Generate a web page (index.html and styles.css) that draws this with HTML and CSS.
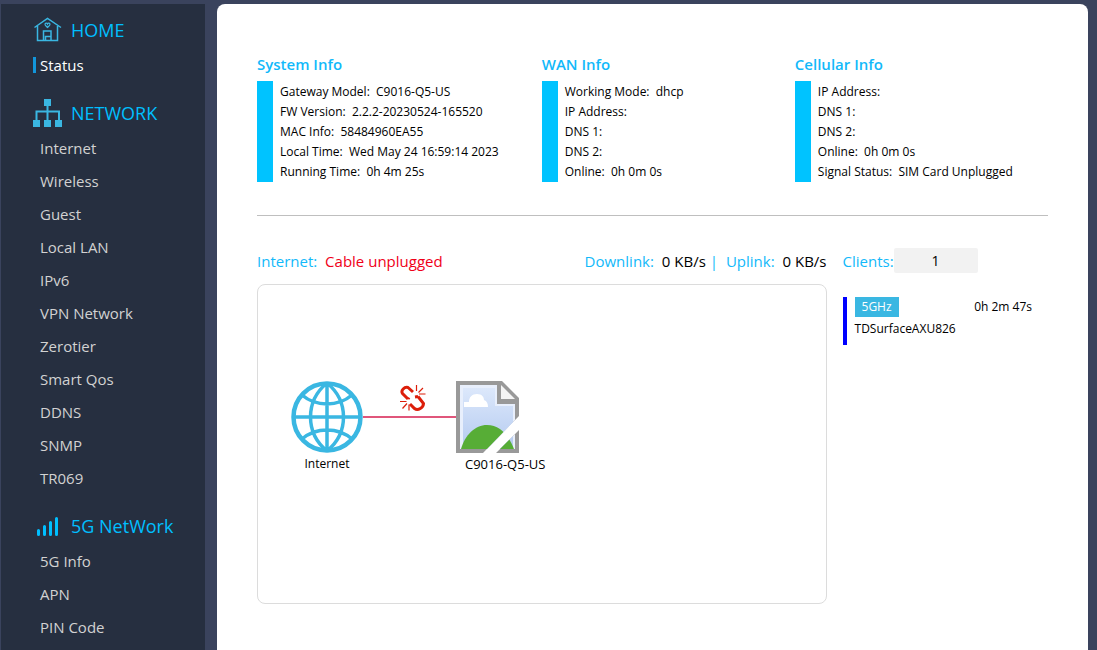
FILE: index.html
```html
<!DOCTYPE html>
<html lang="en">
<head>
  <meta charset="UTF-8" />
  <meta name="viewport" content="width=device-width, initial-scale=1" />
  <title>C9016-Q5-US</title>
  <link rel="stylesheet" href="styles.css">
</head>
<body>

  <nav class="sidebar">
    <h2 class="menu-title">
      <svg class="menu-icon" width="30" height="28" viewBox="0 0 30 28" fill="none" stroke="#3ab7e2" stroke-width="1.5">
        <path d="M1.500 11.500 14.500 2.500 28 11.500M4.500 10v14.500h20V10M10.500 24.500V15h7.500v9.500M12.500 24.500v-4h5"/>
        <path d="M14.500 11.500c-1.500-1.500-2.500-2-2.500-3.200 0-1.500 2-1.600 2.500-.3.500-1.300 2.500-1.200 2.500.3 0 1.200-1 1.700-2.500 3.200z" stroke-width="1.200"/>
      </svg>
      HOME
    </h2>
    <ul class="menu">
      <li><a class="active" href="#">Status</a></li>
    </ul>

    <h2 class="menu-title">
      <svg class="menu-icon" width="30" height="28" viewBox="0 0 30 28" fill="#3ab7e2">
        <path d="M11 0h7v7h-7zM0 21h7v7H0zM11 21h7v7h-7zM22 21h7v7h-7z"/>
        <path d="M3.500 21v-8.500h22.500V21M14.500 7v14" fill="none" stroke="#3ab7e2" stroke-width="2"/>
      </svg>
      NETWORK
    </h2>
    <ul class="menu">
      <li><a href="#">Internet</a></li>
      <li><a href="#">Wireless</a></li>
      <li><a href="#">Guest</a></li>
      <li><a href="#">Local LAN</a></li>
      <li><a href="#">IPv6</a></li>
      <li><a href="#">VPN Network</a></li>
      <li><a href="#">Zerotier</a></li>
      <li><a href="#">Smart Qos</a></li>
      <li><a href="#">DDNS</a></li>
      <li><a href="#">SNMP</a></li>
      <li><a href="#">TR069</a></li>
    </ul>

    <h2 class="menu-title">
      <svg class="menu-icon" width="30" height="28" viewBox="0 0 30 28" stroke="#00bfff" stroke-width="3" stroke-linecap="round">
        <path d="M5.500 18.500v4M11.500 14.500v8M17.500 10.500v12M23.500 6.500v16"/>
      </svg>
      5G NetWork
    </h2>
    <ul class="menu">
      <li><a href="#">5G Info</a></li>
      <li><a href="#">APN</a></li>
      <li><a href="#">PIN Code</a></li>
    </ul>
  </nav>

  <main class="content">
    <div class="info-row">
      <section>
        <h3>System Info</h3>
        <ul class="info-list">
          <li>Gateway Model:&nbsp; C9016-Q5-US</li>
          <li>FW Version:&nbsp; 2.2.2-20230524-165520</li>
          <li>MAC Info:&nbsp; 58484960EA55</li>
          <li>Local Time:&nbsp; Wed May 24 16:59:14 2023</li>
          <li>Running Time:&nbsp; 0h 4m 25s</li>
        </ul>
      </section>
      <section>
        <h3>WAN Info</h3>
        <ul class="info-list">
          <li>Working Mode:&nbsp; dhcp</li>
          <li>IP Address:</li>
          <li>DNS 1:</li>
          <li>DNS 2:</li>
          <li>Online:&nbsp; 0h 0m 0s</li>
        </ul>
      </section>
      <section>
        <h3>Cellular Info</h3>
        <ul class="info-list">
          <li>IP Address:</li>
          <li>DNS 1:</li>
          <li>DNS 2:</li>
          <li>Online:&nbsp; 0h 0m 0s</li>
          <li>Signal Status:&nbsp; SIM Card Unplugged</li>
        </ul>
      </section>
    </div>

    <div class="status-row">
      <section>
        <div class="line-bar">
          <div><span class="label">Internet:</span> <span class="error">Cable unplugged</span></div>
          <div class="speed">
            <span class="label">Downlink:</span> <span>0 KB/s</span>
            <span class="label">|</span>
            <span class="label">Uplink:</span> <span>0 KB/s</span>
          </div>
        </div>

        <div class="topology">
          <div class="node">
            <svg width="72" height="72" viewBox="0 0 72 72" fill="none" stroke="#3ab7e2" stroke-width="3.5">
              <circle cx="36" cy="36" r="33.500" stroke-width="4.500"/>
              <path d="M36 2v68M2 36h68M36 2C14 20 14 52 36 70M36 2c22 18 22 50 0 68M11 14c14 12 36 12 50 0M11 58c14-12 36-12 50 0"/>
            </svg>
            <span>Internet</span>
          </div>
          <div class="link">
            <svg class="broken" width="26" height="26" viewBox="0 0 26 26" fill="none" stroke="#dc1e0a">
              <path d="M8 14 2.500 8.500C.5 5.500 4.500 1.500 8 2.500l5 4.500M10 19l4.500 4.500c3.500 2.500 9-1 9-5L18 11.500M8 14l1-1.500M18 11.500l-3 .5" stroke-width="3"/>
              <path d="M16.500 0v6M23 3l-4.500 4.500M25.500 9H19M0 16.500h6.500M2.500 23.500 7 18.500M9 25.500v-6" stroke-width="1.200"/>
            </svg>
          </div>
          <div class="node router">
            <svg width="63" height="72" viewBox="0 0 63 72">
              <defs>
                <linearGradient id="sky" x1="0" y1="0" x2="0" y2="1">
                  <stop offset="0" stop-color="#dce8fb"/>
                  <stop offset="1" stop-color="#b4caf0"/>
                </linearGradient>
                <clipPath id="page"><path d="M0 0h46l17 17v18L27 72H0zM63 49v23H40z"/></clipPath>
              </defs>
              <g clip-path="url(#page)">
                <path d="M0 0h63v72H0z" fill="#999"/>
                <path d="M4 4h37v19h18v45H4z" fill="#e8effc"/>
                <path d="M7 7h32v18h18v43H7z" fill="url(#sky)"/>
                <path d="M8 26v-5h5c0-5 3-8 8-8s7 3 7 6c3 1 4 4 4 7z" fill="#fff"/>
                <path d="M5 68c4-14 14-24 26-24s21 9 27 24z" fill="#57ad36"/>
                <path d="M45 4l14 14H45z" fill="#f4f4f4"/>
              </g>
            </svg>
            <span>C9016-Q5-US</span>
          </div>
        </div>
      </section>

      <section>
        <div class="clients-bar">
          <label class="label" for="clients">Clients:</label>
          <input type="text" id="clients" value="1" readonly />
        </div>
        <div class="client">
          <div class="client-top">
            <span class="band">5GHz</span>
            <span>0h 2m 47s</span>
          </div>
          <div>TDSurfaceAXU826</div>
        </div>
      </section>
    </div>
  </main>

</body>
</html>
```
FILE: styles.css
```css
* {
  box-sizing: border-box;
}

body {
  display: flex;
  gap: 12px;
  min-height: 100vh;
  margin: 0;
  padding: 4px 9px 0 1px;
  background: #3a435d;
  font-family: "Segoe UI", "Open Sans", sans-serif;
  font-size: 12px;
  color: #000;
}

ul {
  list-style: none;
  margin: 0;
  padding: 0;
}

/* sidebar */
.sidebar {
  flex: none;
  width: 204px;
  padding: 8px 0 0 32px;
  background: #262f40;
}
.menu-title {
  display: flex;
  align-items: center;
  gap: 8px;
  height: 36px;
  margin: 0;
  font-size: 18px;
  font-weight: normal;
  color: #00bfff;
}
.menu {
  margin-bottom: 14px;
}
.menu:last-child {
  margin-bottom: 0;
}
.menu li {
  display: flex;
  align-items: center;
  height: 33px;
}
.menu a {
  padding-left: 4px;
  border-left: 3px solid transparent;
  font-size: 15px;
  line-height: 16px;
  color: #d2d2d2;
  text-decoration: none;
}
.menu a.active {
  border-left-color: #1296db;
  color: #fff;
}

/* main panel */
.content {
  flex: 1;
  padding: 48px 40px 0;
  background: #fff;
  border-radius: 8px 8px 0 0;
}
.info-row {
  display: grid;
  grid-template-columns: 36% 32% 32%;
  padding-bottom: 33px;
  border-bottom: 1px solid #bfbfbf;
}
h3 {
  margin: 0 0 5px;
  font-size: 15px;
  line-height: 24px;
  font-weight: 600;
  color: #12b9fa;
}
.info-list {
  padding-top: 1px;
  padding-left: 7px;
  border-left: 16px solid #00c3ff;
  line-height: 20px;
  white-space: nowrap;
}

.status-row {
  display: grid;
  grid-template-columns: 72% 1fr;
  column-gap: 16px;
  padding-top: 32px;
}
.line-bar,
.clients-bar {
  display: flex;
  align-items: center;
  height: 25px;
  font-size: 15px;
  line-height: 20px;
  white-space: nowrap;
}
.line-bar {
  justify-content: space-between;
}
.line-bar .label {
  margin-right: 4px;
}
.label {
  color: #12b9fa;
}
.error {
  color: #f00018;
}

.topology {
  display: flex;
  align-items: flex-start;
  height: 320px;
  margin-top: 11px;
  padding: 96px 33px 0;
  border: 1px solid #dcdcdc;
  border-radius: 8px;
}
.node {
  display: flex;
  flex-direction: column;
  align-items: center;
  width: 72px;
  line-height: 22px;
}
.router {
  align-items: flex-start;
}
.router span {
  padding-left: 9px;
  font-size: 13px;
  white-space: nowrap;
}
.link {
  position: relative;
  width: 93px;
  margin-top: 35px;
  border-top: 2px solid #e0567b;
}
.broken {
  position: absolute;
  left: 37px;
  bottom: 7px;
}

#clients {
  width: 84px;
  height: 25px;
  padding: 0;
  border: none;
  border-radius: 2px;
  background: #f2f2f2;
  font: inherit;
  font-size: 14px;
  text-align: center;
}
.client {
  height: 48px;
  margin-top: 24px;
  padding: 0 16px 0 8px;
  border-left: 4px solid #0000ff;
  line-height: 24px;
}
.client-top {
  display: flex;
  justify-content: space-between;
  line-height: 20px;
}
.band {
  padding: 0 7px;
  background: #3ab7e2;
  color: #fff;
}
```
